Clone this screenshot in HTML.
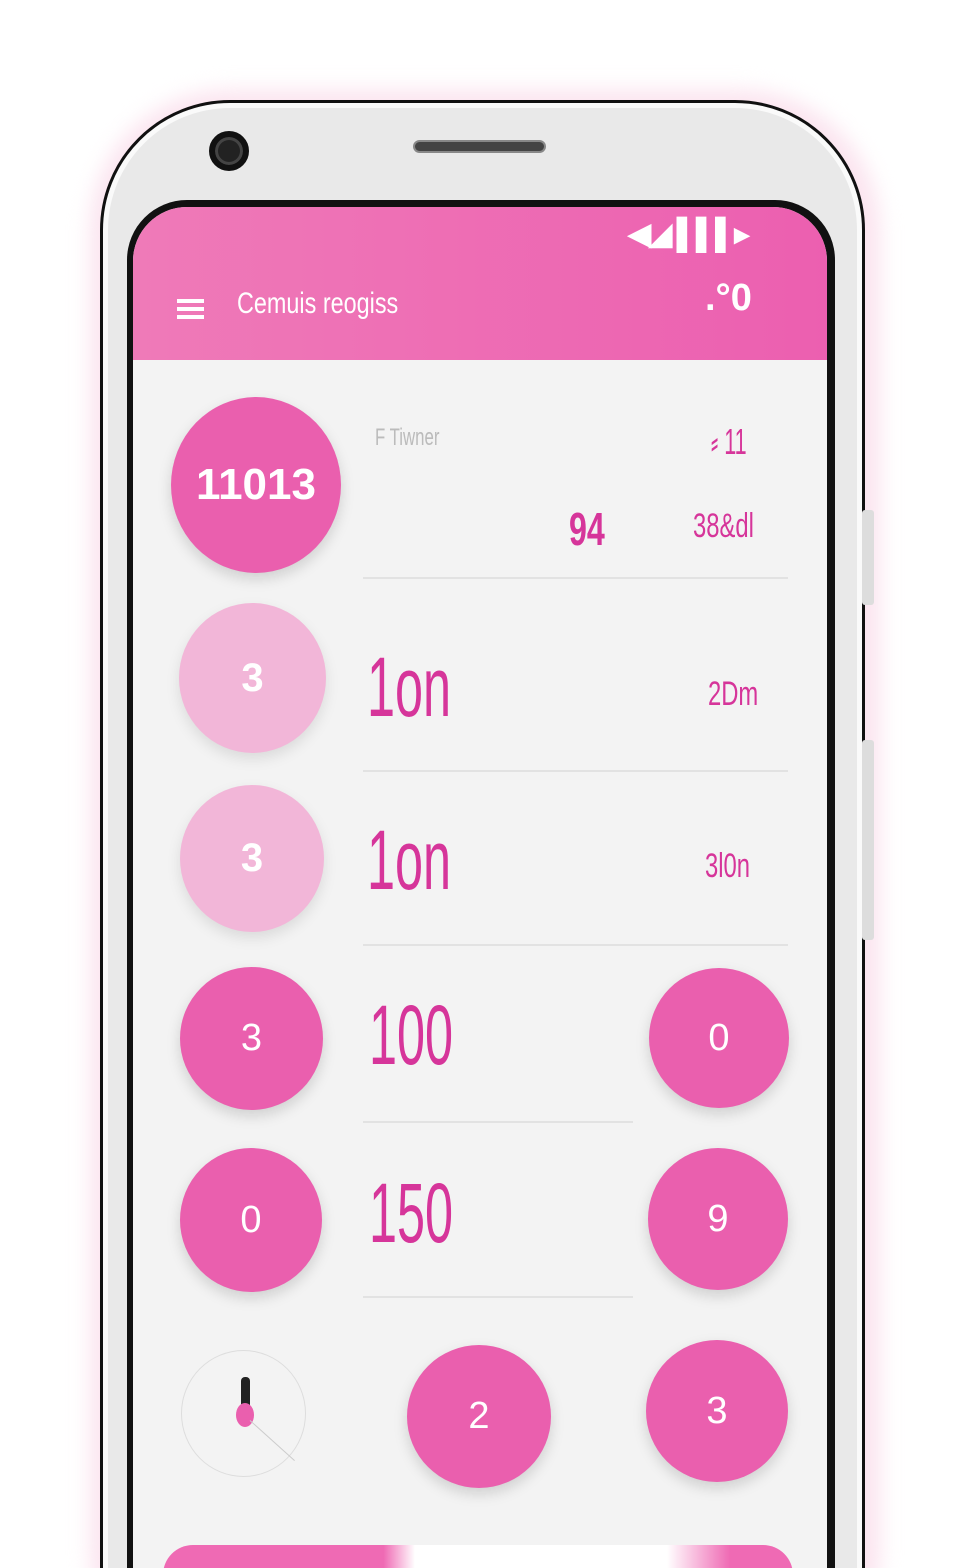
<!DOCTYPE html>
<html><head><style>
*{margin:0;padding:0;box-sizing:border-box}
html,body{width:960px;height:1568px;overflow:hidden}
body{background:#fff;font-family:"Liberation Sans",sans-serif}
#w{position:relative;width:960px;height:1568px;overflow:hidden}
.abs{position:absolute}
.c{position:absolute;border-radius:50%;display:flex;align-items:center;justify-content:center;color:#fff;font-family:"Liberation Sans Narrow","Liberation Sans",sans-serif}
.dk{background:#ea5fae;box-shadow:0 6px 14px rgba(0,0,0,.15)}
.lt{background:#f2b6d8;box-shadow:0 6px 14px rgba(0,0,0,.1)}
.big{position:absolute;color:#d6359a;font-size:84px;font-family:"Liberation Sans Narrow","Liberation Sans",sans-serif;transform:scaleX(.6);transform-origin:left;font-weight:300}
.sm{position:absolute;color:#d6359a;font-size:34px;font-family:"Liberation Sans Narrow",sans-serif;transform:scaleX(.7);transform-origin:left}
.ln{position:absolute;height:2px;background:#e2e2e2}
</style></head><body><div id="w">
<div class="abs" style="left:90px;top:90px;width:790px;height:1600px;border-radius:140px;background:#fbe4ef;filter:blur(10px)"></div>
<div class="abs" style="left:100px;top:100px;width:765px;height:1600px;border-radius:130px;background:#e9e9e9;border:3px solid #111;box-shadow:inset 0 0 0 5px #fafafa"></div>
<div class="abs" style="left:862px;top:510px;width:12px;height:95px;background:#ddd;border-radius:3px"></div>
<div class="abs" style="left:862px;top:740px;width:12px;height:200px;background:#ddd;border-radius:3px"></div>
<div class="abs" style="left:209px;top:131px;width:40px;height:40px;border-radius:50%;background:#222;border:6px solid #111;box-shadow:inset 0 0 0 3px #444"></div>
<div class="abs" style="left:413px;top:140px;width:133px;height:13px;border-radius:7px;background:#444;border:2px solid #888"></div>
<div class="abs" style="left:127px;top:200px;width:708px;height:1500px;border-radius:60px 60px 0 0;background:#111"></div>
<div class="abs" style="left:133px;top:207px;width:694px;height:1500px;border-radius:54px 54px 0 0;background:#f3f3f3;overflow:hidden">
 <div class="abs" style="left:0;top:0;width:694px;height:153px;background:linear-gradient(90deg,#ef7ab8,#ec5fb0)"></div>
 <div class="abs" style="left:495px;top:10px;color:#fff;font-size:30px;font-weight:bold;letter-spacing:-2px">◀◢ ▌▌▌▸</div>
 <div class="abs" style="left:44px;top:92px;width:27px;height:4px;background:#fff;box-shadow:0 8px 0 #fff,0 16px 0 #fff"></div>
 <div class="abs" style="left:104px;top:80px;color:#fff;font-size:30px;transform:scaleX(.78);transform-origin:left">Cemuis reogiss</div>
 <div class="abs" style="left:572px;top:70px;color:#fff;font-size:38px;font-weight:bold">.°0</div>
 <div class="abs" style="left:242px;top:217px;color:#bbb;font-size:24px;transform:scaleX(.7);transform-origin:left">F Tiwner</div>
 <div class="abs" style="left:578px;top:214px;color:#d6359a;font-size:36px;transform:scaleX(.6);transform-origin:left">⸗ 11</div>
 <div class="abs" style="left:436px;top:295px;color:#d6359a;font-size:46px;font-weight:bold;transform:scaleX(.7);transform-origin:left">94</div>
 <div class="sm" style="left:560px;top:300px">38&amp;dl</div>
 <div class="ln" style="left:230px;top:370px;width:425px"></div>
 <div class="big" style="left:234px;top:432px">1on</div>
 <div class="sm" style="left:575px;top:468px">2Dm</div>
 <div class="ln" style="left:230px;top:563px;width:425px"></div>
 <div class="big" style="left:234px;top:605px">1on</div>
 <div class="sm" style="left:572px;top:640px">3l0n</div>
 <div class="ln" style="left:230px;top:737px;width:425px"></div>
 <div class="big" style="left:236px;top:780px">100</div>
 <div class="ln" style="left:230px;top:914px;width:270px"></div>
 <div class="big" style="left:236px;top:958px">150</div>
 <div class="ln" style="left:230px;top:1089px;width:270px"></div>
 <div class="abs" style="left:30px;top:1338px;width:630px;height:80px;border-radius:30px;background:linear-gradient(90deg,#ef6ab4 0 35%,#fff 40% 80%,#ef6ab4 90%)"></div>
</div>
<div class="c dk" style="left:171px;top:397px;width:170px;height:176px;font-size:44px;font-weight:bold">11013</div>
<div class="c lt" style="left:179px;top:603px;width:147px;height:150px;font-size:40px;font-weight:bold">3</div>
<div class="c lt" style="left:180px;top:785px;width:144px;height:147px;font-size:40px;font-weight:bold">3</div>
<div class="c dk" style="left:180px;top:967px;width:143px;height:143px;font-size:38px">3</div>
<div class="c dk" style="left:649px;top:968px;width:140px;height:140px;font-size:38px">0</div>
<div class="c dk" style="left:180px;top:1148px;width:142px;height:144px;font-size:38px">0</div>
<div class="c dk" style="left:648px;top:1148px;width:140px;height:142px;font-size:38px">9</div>
<div class="abs" style="left:181px;top:1350px;width:125px;height:127px;border-radius:50%;border:1.5px solid #ddd"></div>
<div class="abs" style="left:241px;top:1377px;width:9px;height:40px;border-radius:4px;background:#222"></div>
<div class="abs" style="left:236px;top:1403px;width:18px;height:24px;border-radius:50%;background:#ea5fae"></div>
<div class="abs" style="left:250px;top:1420px;width:60px;height:1px;background:#ccc;transform:rotate(42deg);transform-origin:left"></div>
<div class="c dk" style="left:407px;top:1345px;width:144px;height:143px;font-size:38px">2</div>
<div class="c dk" style="left:646px;top:1340px;width:142px;height:142px;font-size:38px">3</div>
</div></body></html>
